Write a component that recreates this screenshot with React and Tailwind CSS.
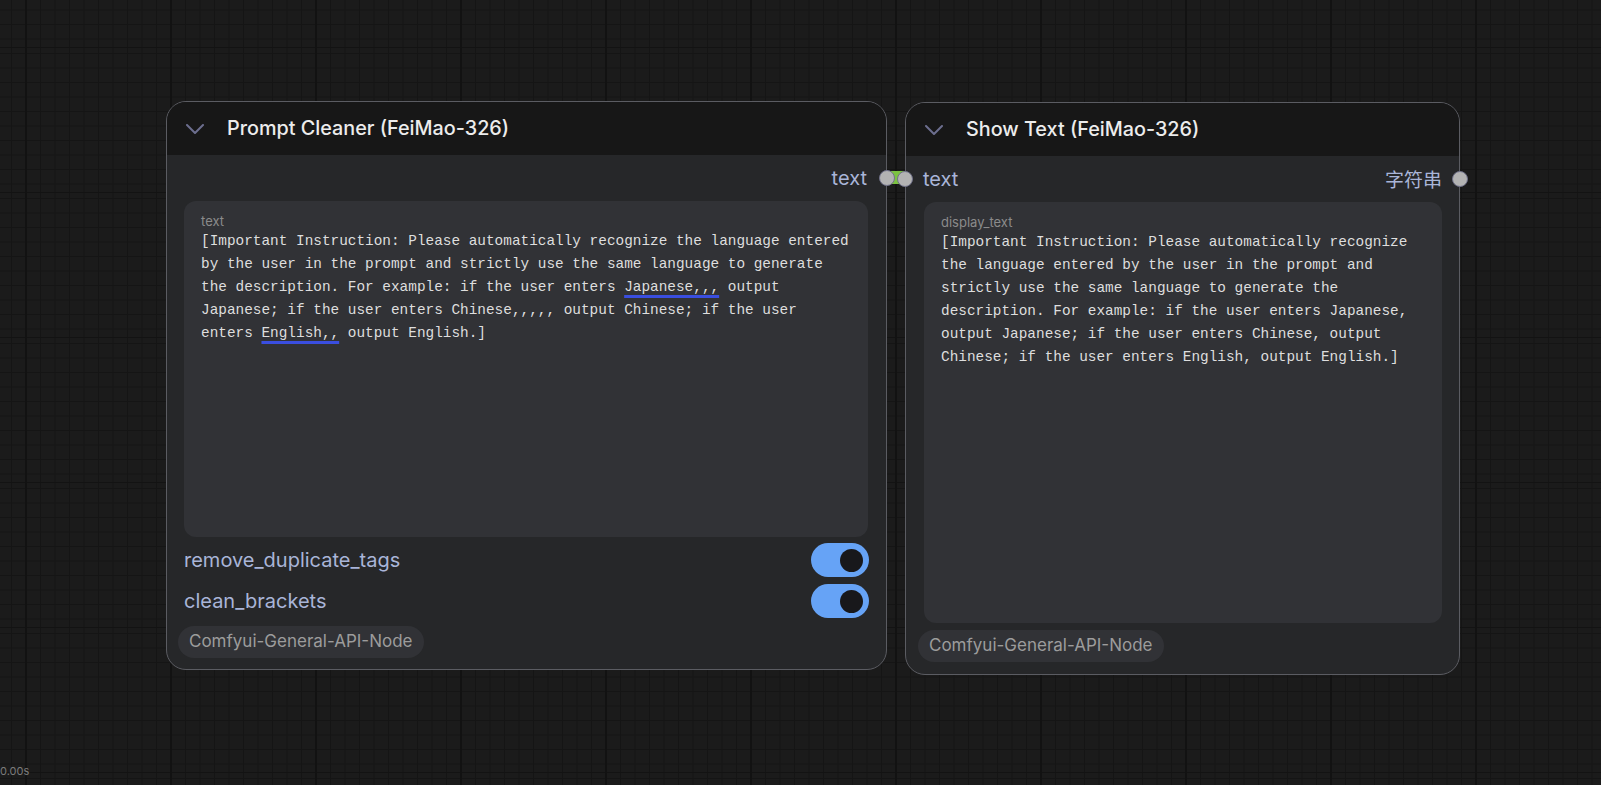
import React from "react";

const UI = { fontFamily: "Inter, 'Noto Sans', 'Noto Sans CJK SC', sans-serif" };
const MONO = { fontFamily: "'Liberation Mono', 'DejaVu Sans Mono', monospace" };

function Chevron() {
  return (
    <svg width="18" height="10" viewBox="0 0 18 10" className="shrink-0">
      <polyline points="1,1 9,9 17,1" fill="none" stroke="#6c6e8e" strokeWidth="2" strokeLinecap="round" strokeLinejoin="round" />
    </svg>
  );
}

function Dot({ side }) {
  return (
    <span
      className={`absolute top-1/2 -translate-y-1/2 w-4 h-4 rounded-full bg-[#b3b3b3] border-[1.5px] border-[#707189] z-20 ${
        side === "left" ? "-left-[9px]" : "-right-[9px]"
      }`}
    />
  );
}

function Spell({ children }) {
  return (
    <span className="underline decoration-[#3a4ee0] decoration-[2.5px] underline-offset-[4px]">{children}</span>
  );
}

function Toggle() {
  return (
    <div className="w-[58px] h-[34px] rounded-full bg-[#66a3f6] flex items-center justify-end pr-[6px]">
      <div className="w-[23px] h-[23px] rounded-full bg-[#18181b]" />
    </div>
  );
}

function Pill() {
  return (
    <div className="inline-flex items-center h-[32px] px-[11px] rounded-full bg-[#313236] text-[17px] text-[#9c9c9c]">
      Comfyui-General-API-Node
    </div>
  );
}

function Header({ title }) {
  return (
    <div className="h-[53px] bg-[#171717] rounded-t-[19px] flex items-center pl-[19px] gap-[23px] shrink-0">
      <Chevron />
      <span className="text-[19.8px] font-medium text-[#ececec]">{title}</span>
    </div>
  );
}

const LEFT_LINES = [
  "[Important Instruction: Please automatically recognize the language entered",
  "by the user in the prompt and strictly use the same language to generate",
  <>the description. For example: if the user enters <Spell>Japanese,,,</Spell> output</>,
  "Japanese; if the user enters Chinese,,,,, output Chinese; if the user",
  <>enters <Spell>English,,</Spell> output English.]</>,
];

const RIGHT_LINES = [
  "[Important Instruction: Please automatically recognize",
  "the language entered by the user in the prompt and",
  "strictly use the same language to generate the",
  "description. For example: if the user enters Japanese,",
  "output Japanese; if the user enters Chinese, output",
  "Chinese; if the user enters English, output English.]",
];

function TextBox({ label, lines, className }) {
  return (
    <div className={`rounded-[12px] bg-[#313236] pl-[17px] pt-[12px] ${className}`}>
      <div className="text-[13px] leading-4 text-[#8b8b8b]">{label}</div>
      <div className="mt-[1px] text-[14.4px] leading-[23px] text-[#dedede]" style={MONO}>
        {lines.map((l, i) => (
          <div key={i} className="whitespace-pre">
            {l}
          </div>
        ))}
      </div>
    </div>
  );
}

export default function App() {
  return (
    <div
      className="relative w-[1601px] h-[785px] overflow-hidden bg-[#1b1b1b] [background-image:linear-gradient(to_right,#121212_2px,transparent_2px),linear-gradient(to_bottom,#131313_1px,transparent_1px),linear-gradient(to_right,#151515_1px,transparent_1px),linear-gradient(to_bottom,#151515_1px,transparent_1px)] [background-size:145px_145px,145px_145px,14.5px_14.5px,14.5px_14.5px] [background-position:25px_0,0_47px,11px_0,0_9.5px]"
      style={UI}
    >
      {/* link between nodes */}
      <div className="absolute left-[886px] top-[171px] w-[20px] h-[13px] bg-[#7cc242]" />

      {/* Prompt Cleaner node */}
      <div className="absolute left-[166px] top-[101px] w-[721px] h-[569px] rounded-[20px] border border-[#5b5c62] bg-[#262729] flex flex-col z-10">
        <Header title="Prompt Cleaner (FeiMao-326)" />
        <div className="flex-1 flex flex-col px-[17px]">
          <div className="relative h-[46px] flex items-center justify-end -mx-[17px] pr-[19px]">
            <span className="text-[20px] text-[#a9b5d8]">text</span>
            <Dot side="right" />
          </div>
          <TextBox label="text" lines={LEFT_LINES} className="h-[336px] mr-[1px]" />
          <div className="mt-[6px] flex flex-col gap-[7px]">
            <div className="h-[34px] flex items-center justify-between">
              <span className="text-[20px] text-[#a9b5d8]">remove_duplicate_tags</span>
              <Toggle />
            </div>
            <div className="h-[34px] flex items-center justify-between">
              <span className="text-[20px] text-[#a9b5d8]">clean_brackets</span>
              <Toggle />
            </div>
          </div>
          <div className="mt-[8px] -ml-[6px]">
            <Pill />
          </div>
        </div>
      </div>

      {/* Show Text node */}
      <div className="absolute left-[905px] top-[102px] w-[555px] h-[573px] rounded-[20px] border border-[#5b5c62] bg-[#262729] flex flex-col z-10">
        <Header title="Show Text (FeiMao-326)" />
        <div className="flex-1 flex flex-col px-[17px]">
          <div className="relative h-[46px] flex items-center justify-between -mx-[17px] pl-[17px] pr-[17px]">
            <Dot side="left" />
            <span className="text-[20px] text-[#a9b5d8]">text</span>
            <span className="text-[19px] text-[#a9b5d8]" style={{ fontFamily: "'Noto Sans CJK SC', sans-serif" }}>
              字符串
            </span>
            <Dot side="right" />
          </div>
          <TextBox label="display_text" lines={RIGHT_LINES} className="h-[421px] ml-[1px]" />
          <div className="mt-[7px] -ml-[5px]">
            <Pill />
          </div>
        </div>
      </div>

      <div className="absolute left-0 bottom-[6px] text-[11px] text-[#7c7c7c]">0.00s</div>
    </div>
  );
}
